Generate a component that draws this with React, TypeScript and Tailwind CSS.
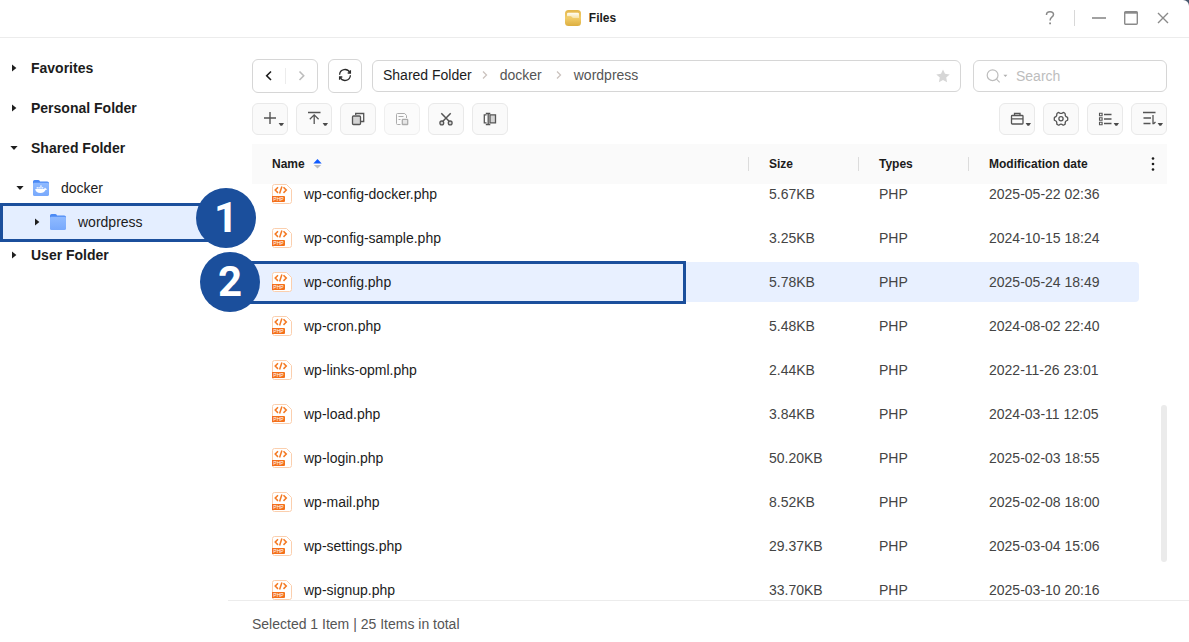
import { useLayoutEffect, useRef, useState } from "react";
import type { ReactNode } from "react";
import clsx from "clsx";

type FileItem = {
  name: string;
  size: string;
  type: string;
  modified: string;
};

const files: FileItem[] = [
  { name: "wp-config-docker.php", size: "5.67KB", type: "PHP", modified: "2025-05-22 02:36" },
  { name: "wp-config-sample.php", size: "3.25KB", type: "PHP", modified: "2024-10-15 18:24" },
  { name: "wp-config.php", size: "5.78KB", type: "PHP", modified: "2025-05-24 18:49" },
  { name: "wp-cron.php", size: "5.48KB", type: "PHP", modified: "2024-08-02 22:40" },
  { name: "wp-links-opml.php", size: "2.44KB", type: "PHP", modified: "2022-11-26 23:01" },
  { name: "wp-load.php", size: "3.84KB", type: "PHP", modified: "2024-03-11 12:05" },
  { name: "wp-login.php", size: "50.20KB", type: "PHP", modified: "2025-02-03 18:55" },
  { name: "wp-mail.php", size: "8.52KB", type: "PHP", modified: "2025-02-08 18:00" },
  { name: "wp-settings.php", size: "29.37KB", type: "PHP", modified: "2025-03-04 15:06" },
  { name: "wp-signup.php", size: "33.70KB", type: "PHP", modified: "2025-03-10 20:16" },
];

/* ---------- Icons ---------- */

function TreeCaret({ open = false }: { open?: boolean }) {
  return (
    <svg viewBox="0 0 8 8" className="h-2 w-2 shrink-0 fill-[#1f1f1f]" aria-hidden="true">
      {open ? <path d="M0.4 2h7.2L4 6z" /> : <path d="M2 0.4v7.2L6.4 4z" />}
    </svg>
  );
}

function FolderIcon({ docker = false }: { docker?: boolean }) {
  return (
    <svg viewBox="0 0 16 16" className="h-4 w-4 shrink-0" aria-hidden="true">
      <defs>
        <linearGradient id="folder-front" x1="0" y1="0" x2="0" y2="1">
          <stop offset="0" stopColor="#8fbaff" />
          <stop offset="1" stopColor="#78a9fc" />
        </linearGradient>
      </defs>
      <path d="M0 1.6Q0 0 1.6 0h3.7q.8 0 1.2.6l.5.8h7.2Q16 1.4 16 3v3H0z" fill="#4b8af5" />
      <path d="M0 4.2q0-1.4 1.4-1.4h13.2q1.4 0 1.4 1.4v10.2q0 1.600-1.600 1.600H1.600Q0 16 0 14.400z" fill="url(#folder-front)" />
      {docker && (
        <g fill="#fff">
          <path d="M2.200 9h8.900q.3-1 .9-1.600.9.6.9 1.300.8-.1 1.300.3-.5 1-1.700 1-1.300 3-5 3-4.700 0-5.300-4z" />
          <path d="M3.600 7.200h1.500v1.400H3.600zM5.400 7.200h1.500v1.400H5.400zM7.200 7.200h1.500v1.400H7.200zM9 7.200h1.300v1.400H9zM7.200 5.400h1.500v1.400H7.200z" />
        </g>
      )}
    </svg>
  );
}

function FilesAppIcon() {
  return (
    <svg viewBox="0 0 16 16" className="h-4 w-4" aria-hidden="true">
      <defs>
        <linearGradient id="app-bg" x1="0" y1="0" x2="0" y2="1">
          <stop offset="0" stopColor="#e3b64c" />
          <stop offset="0.5" stopColor="#f2cd6a" />
          <stop offset="1" stopColor="#dcae3f" />
        </linearGradient>
        <linearGradient id="app-paper" x1="0" y1="0" x2="0" y2="1">
          <stop offset="0" stopColor="#fffdf4" />
          <stop offset="1" stopColor="#f7e3a8" />
        </linearGradient>
      </defs>
      <rect width="16" height="16" rx="3.5" fill="url(#app-bg)" />
      <path d="M2 4q0-1.200 1.200-1.200h9.600q1.200 0 1.200 1.200v4H8.400Q7.500 8 7 7.200T5.600 6.200H2z" fill="url(#app-paper)" />
    </svg>
  );
}

function PhpFileIcon() {
  return (
    <svg viewBox="0 0 20 20" className="h-5 w-5 shrink-0" aria-hidden="true">
      <path
        d="M2.500.5h12l5 5v12q0 2-2 2h-15q-2 0-2-2v-15q0-2 2-2z"
        fill="#fff"
        stroke="#fbcfae"
      />
      <path
        d="M6 3.300 3.200 6.100 6 8.900M11.500 3.300l2.800 2.800-2.800 2.800M9.900 2.600 7.600 9.600"
        fill="none"
        stroke="#f47a24"
        strokeWidth="1.500"
      />
      <path d="M0 12h12q1 0 1 1v4q0 1-1 1H0z" fill="#f4701c" />
      <text x="6.500" y="16.800" fontSize="5" textAnchor="middle" fill="#fff">
        PHP
      </text>
    </svg>
  );
}

// Glyph area of a toolbar button, optionally with the small menu arrow
function ToolGlyph({ menu = false, children }: { menu?: boolean; children: ReactNode }) {
  return (
    <svg
      viewBox="0 0 34 30"
      className="block h-[30px] w-[34px]"
      fill="none"
      stroke="#555"
      strokeWidth="1.300"
      aria-hidden="true"
    >
      {children}
      {menu && <path d="M25.600 19h5.400l-1.900 2.700h-1.600z" fill="#4a4a4a" stroke="none" />}
    </svg>
  );
}

function ToolButton({
  label,
  menu,
  disabled,
  children,
}: {
  label: string;
  menu?: boolean;
  disabled?: boolean;
  children: ReactNode;
}) {
  return (
    <button
      type="button"
      aria-label={label}
      disabled={disabled}
      className={clsx(
        "rounded-md border border-[#e9e9e9] bg-[#fafafa]",
        disabled ? "opacity-70" : "hover:bg-gray-100"
      )}
    >
      <ToolGlyph menu={menu}>{children}</ToolGlyph>
    </button>
  );
}

/* ---------- Window parts ---------- */

function TitleBar() {
  return (
    <header className="grid h-[38px] shrink-0 grid-cols-[1fr_auto_1fr] items-center border-b border-[#ececec] pb-px">
      <div />
      <h1 className="flex items-center gap-2 pr-2 text-xs font-bold text-[#1c1c1c]">
        <FilesAppIcon />
        Files
      </h1>
      <div className="flex items-center justify-end gap-4 pr-[18px] text-[#8a8a8a]">
        <button type="button" aria-label="Help" className="w-4">
          <svg viewBox="0 0 16 16" className="h-4 w-4" fill="none" stroke="currentColor" strokeWidth="1.500">
            <path d="M4.500 5V4.700Q4.500 1.700 8 1.700t3.500 2.900q0 1.400-1.700 2.600T8.100 10.400" />
            <path d="M7.200 12.400h1.800v1.800H7.200z" fill="currentColor" stroke="none" />
          </svg>
        </button>
        <span className="h-4 w-px bg-[#d8d8d8]" />
        <button type="button" aria-label="Minimize">
          <svg viewBox="0 0 16 16" className="h-4 w-4" fill="none" stroke="currentColor" strokeWidth="1.600">
            <path d="M1 8h14" />
          </svg>
        </button>
        <button type="button" aria-label="Maximize">
          <svg viewBox="0 0 16 16" className="h-4 w-4" fill="none" stroke="currentColor" strokeWidth="1.400">
            <rect x="1.700" y="1.700" width="12.600" height="12.600" rx="1" />
            <path d="M1.700 2.700h12.600" strokeWidth="2" />
          </svg>
        </button>
        <button type="button" aria-label="Close">
          <svg viewBox="0 0 16 16" className="h-4 w-4" fill="none" stroke="currentColor" strokeWidth="1.400">
            <path d="m3 3 10 10M13 3 3 13" />
          </svg>
        </button>
      </div>
    </header>
  );
}

function Sidebar() {
  const section = "flex h-10 w-full items-center gap-[13px] pl-2.5 text-left font-bold";

  return (
    <nav aria-label="Folders" className="relative z-10 w-[228px] shrink-0 pt-2.5 text-sm text-[#1c1c1c]">
      <button type="button" className={section}>
        <TreeCaret />
        Favorites
      </button>
      <button type="button" className={section}>
        <TreeCaret />
        Personal Folder
      </button>
      <button type="button" aria-expanded="true" className={section}>
        <TreeCaret open />
        Shared Folder
      </button>
      <button type="button" aria-expanded="true" className="flex h-10 w-full items-center pl-4 text-left">
        <TreeCaret open />
        <span className="ml-[9px]">
          <FolderIcon docker />
        </span>
        <span className="ml-3">docker</span>
      </button>
      <div className="relative">
        <div className="absolute -top-[5px] -bottom-[7px] left-0 w-[220px] border-[3px] border-[#1b4f9c] bg-[#e4eeff]" />
        <button type="button" aria-current="true" className="relative flex h-[27px] w-full items-center pl-[33px] text-left">
          <TreeCaret />
          <span className="ml-[9px]">
            <FolderIcon />
          </span>
          <span className="ml-3">wordpress</span>
        </button>
        <StepBadge className="-top-5 left-[196px]">1</StepBadge>
      </div>
      <button type="button" className={section}>
        <TreeCaret />
        User Folder
      </button>
    </nav>
  );
}

function StepBadge({ className, children }: { className: string; children: ReactNode }) {
  return (
    <span
      className={clsx(
        "absolute flex h-[60px] w-[60px] items-center justify-center rounded-full bg-[#1b4f9c] font-[Roboto,sans-serif] text-[42px] leading-none font-bold text-white",
        className
      )}
    >
      {children}
    </span>
  );
}

function CrumbArrow() {
  return (
    <svg viewBox="0 0 8 10" className="mx-2.5 h-2.5 w-2" fill="none" stroke="#cbc3bf" strokeWidth="1.300" aria-hidden="true">
      <path d="m1 1.500 3.500 3.500L1 8.500" />
    </svg>
  );
}

function NavigationRow() {
  const [query, setQuery] = useState("");

  return (
    <div className="flex items-center text-sm">
      <div className="flex h-[34px] w-[66px] shrink-0 items-center rounded-md border border-[#d6d6d6]">
        <button type="button" aria-label="Back" className="flex flex-1 justify-center">
          <svg viewBox="0 0 8 12" className="h-3 w-2" fill="none" stroke="#1c1c1c" strokeWidth="1.600">
            <path d="M6 1.500 1.700 5.700 6 10" />
          </svg>
        </button>
        <span className="h-4 w-px bg-[#ececec]" />
        <button type="button" aria-label="Forward" disabled className="flex flex-1 justify-center">
          <svg viewBox="0 0 8 12" className="h-3 w-2" fill="none" stroke="#bdbdbd" strokeWidth="1.600">
            <path d="M2.500 1.500 6.700 5.700 2.500 10" />
          </svg>
        </button>
      </div>

      <button
        type="button"
        aria-label="Refresh"
        className="ml-2.5 flex h-[34px] w-[34px] shrink-0 items-center justify-center rounded-md border border-[#d6d6d6]"
      >
        <svg viewBox="0 0 14 14" className="h-3.5 w-3.5 -translate-y-px" fill="none" stroke="#2a2a2a" strokeWidth="1.300">
          <path d="M1.600 6.700A5.400 5.400 0 0 1 11.900 4.700M12.400 7.300A5.400 5.400 0 0 1 2.100 9.300" />
          <path d="M12.400 2.300v2.700H9.700M1.600 11.700V9h2.700" />
        </svg>
      </button>

      <div className="ml-2.5 flex h-8 min-w-0 flex-1 items-center justify-between rounded-md border border-[#d6d6d6] px-2.5">
        <nav aria-label="Path" className="flex items-center pb-0.5 text-[#555]">
          <a href="#shared" className="text-[#1c1c1c]">Shared Folder</a>
          <CrumbArrow />
          <a href="#docker">docker</a>
          <span className="pl-1">
            <CrumbArrow />
          </span>
          <a href="#wordpress">wordpress</a>
        </nav>
        <button type="button" aria-label="Add to favorites">
          <svg viewBox="0 0 14 14" className="h-3.5 w-3.5 fill-[#d6d6d6]">
            <path d="m7 .5 2 4.300 4.700.6-3.500 3.200.9 4.700L7 11l-4.100 2.300.9-4.700L.3 5.400 5 4.800z" />
          </svg>
        </button>
      </div>

      <label className="ml-3 flex h-8 w-[194px] shrink-0 items-center rounded-md border border-[#d6d6d6] pl-3">
        <svg viewBox="0 0 22 14" className="h-3.5 w-[22px] shrink-0" fill="none" stroke="#bdbdbd" strokeWidth="1.200" aria-hidden="true">
          <circle cx="6.600" cy="6.200" r="5.400" />
          <path d="m10.500 10.200 3.200 3.200" />
          <path d="M17.400 5.800h4l-2 2.200z" fill="#b0b0b0" stroke="none" />
        </svg>
        <input
          type="search"
          aria-label="Search"
          placeholder="Search"
          value={query}
          onChange={(e) => setQuery(e.target.value)}
          className="ml-2 w-full min-w-0 bg-transparent outline-none placeholder:text-[#bdbdbd]"
        />
      </label>
    </div>
  );
}

function ActionRow() {
  return (
    <div className="mt-2.5 flex items-center justify-between">
      <div className="flex gap-2">
        <ToolButton label="Create" menu>
          <path d="M11 14h12M17 8v12" strokeWidth="1.400" />
        </ToolButton>
        <ToolButton label="Upload" menu>
          <path d="M11 8.500h12.500M17.200 11v9M12.800 15.200l4.400-4.400 4.400 4.400" />
        </ToolButton>
        <ToolButton label="Copy">
          <path d="M14.700 11V9.500h8v8H20" />
          <rect x="11.500" y="12" width="8" height="8.500" rx="1" fill="#d4d4d4" />
        </ToolButton>
        <ToolButton label="Paste" disabled>
          <g stroke="#8a8a8a">
            <path d="M15.500 20.500h-3q-1 0-1-1v-9q0-1 1-1h7.200l1.800 2V14M13.500 12.500h5M13.500 15.500h2" strokeWidth="1" />
            <rect x="17.300" y="15.300" width="5.400" height="5.200" rx=".6" fill="#dedede" />
          </g>
        </ToolButton>
        <ToolButton label="Cut">
          <path d="M12.300 9.200 20.600 17.700M21.700 9.200l-8.300 8.500" strokeWidth="1.500" />
          <circle cx="12.800" cy="18.900" r="1.900" fill="#d4d4d4" />
          <circle cx="21.200" cy="18.900" r="1.900" fill="#d4d4d4" />
        </ToolButton>
        <ToolButton label="Rename">
          <path d="M17 10.800h5.500v8H17z" fill="#d4d4d4" />
          <path d="M13.500 10.800h-2.200v8h2.200" />
          <path d="M12.800 9.500h4.500M12.800 20.500h4.500M15.200 9.500v11" />
        </ToolButton>
      </div>

      <div className="flex gap-2">
        <ToolButton label="Tools" menu>
          <rect x="11.500" y="11.500" width="11.500" height="8.500" rx=".8" />
          <path d="M14.500 11.500v-2h5.500v2M11.500 14.800H23" />
        </ToolButton>
        <ToolButton label="Settings">
          <path d="M14.200 8.600q.5-.3 1 .1 1.800 1.500 3.600 0 .5-.4 1-.1l1 .6q.5.3.4.9-.3 2.300 1.900 3 .6.200.6.800v1.800q0 .6-.6.800-2.200.7-1.900 3 .1.6-.4.900l-1 .6q-.5.300-1-.1-1.800-1.500-3.600 0-.5.400-1 .1l-1-.6q-.5-.3-.4-.9.3-2.300-1.900-3-.6-.2-.6-.8v-1.800q0-.6.6-.8 2.200-.7 1.900-3-.1-.6.400-.9z" />
          <circle cx="17" cy="14.800" r="2.100" />
        </ToolButton>
        <ToolButton label="View mode" menu>
          <path d="M16 10.500h7.500M16 15h7.500M16 19.500h7.500" />
          <path d="M11.500 9.200h2.600v2.600h-2.600zM11.500 13.700h2.600v2.600h-2.600zM11.500 18.200h2.600v2.600h-2.600z" strokeWidth="1.100" />
        </ToolButton>
        <ToolButton label="Sort order" menu>
          <path d="M11 8.500h12.500M11.500 14h7.500M11.500 19.500h7M21 11v8.500h.8l1.700-1.500" />
        </ToolButton>
      </div>
    </div>
  );
}

function ColumnHeader({ children }: { children: ReactNode }) {
  return (
    <th scope="col" className="bg-[#fafafa] p-0 text-left">
      <span className="block h-3.5 border-l border-[#dcdcdc] pl-5 leading-[14px]">{children}</span>
    </th>
  );
}

function FileTable() {
  const scrollRef = useRef<HTMLDivElement>(null);
  const [selected, setSelected] = useState("wp-config.php");

  // The list opens slightly scrolled, first row partly under the header
  useLayoutEffect(() => {
    if (scrollRef.current) scrollRef.current.scrollTop = 10;
  }, []);

  return (
    <div className="relative mt-[9px] min-h-0 flex-1">
      <div ref={scrollRef} className="h-full overflow-y-auto [scrollbar-width:none]">
        <table className="w-full table-fixed border-separate border-spacing-0 text-sm text-[#444]">
          <colgroup>
            <col />
            <col className="w-[110px]" />
            <col className="w-[110px]" />
            <col className="w-[171px]" />
            <col className="w-7" />
          </colgroup>
          <thead className="sticky top-0 z-10 text-xs text-[#1c1c1c]">
            <tr className="h-10">
              <th scope="col" aria-sort="ascending" className="bg-[#fafafa] py-0 pr-0 pl-5 text-left">
                <button type="button" className="flex items-center gap-2 font-bold">
                  Name
                  <svg viewBox="0 0 9 10" className="h-2.5 w-[9px]" aria-hidden="true">
                    <path d="M.3 4.500 4.500 0l4.200 4.500z" fill="#0f5bff" />
                    <path d="M.8 6h7.400L4.500 9.600z" fill="#bdbdbd" />
                  </svg>
                </button>
              </th>
              <ColumnHeader>Size</ColumnHeader>
              <ColumnHeader>Types</ColumnHeader>
              <ColumnHeader>Modification date</ColumnHeader>
              <th className="bg-[#fafafa] p-0">
                <button type="button" aria-label="Choose columns" className="mx-auto block">
                  <svg viewBox="0 0 4 16" className="h-4 w-1 fill-[#1c1c1c]">
                    <circle cx="2" cy="2.500" r="1.300" />
                    <circle cx="2" cy="8" r="1.300" />
                    <circle cx="2" cy="13.500" r="1.300" />
                  </svg>
                </button>
              </th>
            </tr>
          </thead>
          <tbody>
            {files.map((file) => {
              const cell = clsx(
                "flex h-10 items-center",
                file.name === selected && "bg-[#e8f0ff]"
              );

              return (
                <tr key={file.name} onClick={() => setSelected(file.name)}>
                  <td className="p-0 pb-1">
                    <div className={clsx(cell, "gap-3 pl-5 text-[#1c1c1c]")}>
                      <PhpFileIcon />
                      {file.name}
                    </div>
                  </td>
                  <td className="p-0 pb-1">
                    <div className={clsx(cell, "pl-[21px]")}>{file.size}</div>
                  </td>
                  <td className="p-0 pb-1">
                    <div className={clsx(cell, "pl-[21px]")}>{file.type}</div>
                  </td>
                  <td className="p-0 pb-1">
                    <div className={clsx(cell, "rounded-r pl-[21px]")}>{file.modified}</div>
                  </td>
                  <td />
                </tr>
              );
            })}
          </tbody>
        </table>
      </div>
      {/* Scroll thumb */}
      <div className="absolute right-0 bottom-[38px] h-[157px] w-1.5 rounded-full bg-[#ebebeb]" />
    </div>
  );
}

export default function App() {
  return (
    <div className="h-screen bg-slate-600 font-['Liberation_Sans',Arial,sans-serif]">
      <div className="flex h-full flex-col rounded-tr-md bg-white">
        <TitleBar />
        <div className="flex min-h-0 flex-1">
          <Sidebar />
          <main className="relative z-10 flex min-w-0 flex-1 flex-col">
            <div className="flex min-h-0 flex-1 flex-col pt-[21px] pr-[22px] pl-6">
              <NavigationRow />
              <ActionRow />
              <FileTable />
            </div>
            <footer className="flex h-[42px] shrink-0 items-center border-t border-[#ececec] pt-1 pl-6 text-sm text-[#555]">
              Selected 1 Item | 25 Items in total
            </footer>

            {/* Step 2 marker over the selected row */}
            <div className="pointer-events-none absolute top-[223px] left-2 h-[43px] w-[450px] border-[3px] border-[#1b4f9c]" />
            <StepBadge className="top-[214px] -left-7">2</StepBadge>
          </main>
        </div>
      </div>
    </div>
  );
}
